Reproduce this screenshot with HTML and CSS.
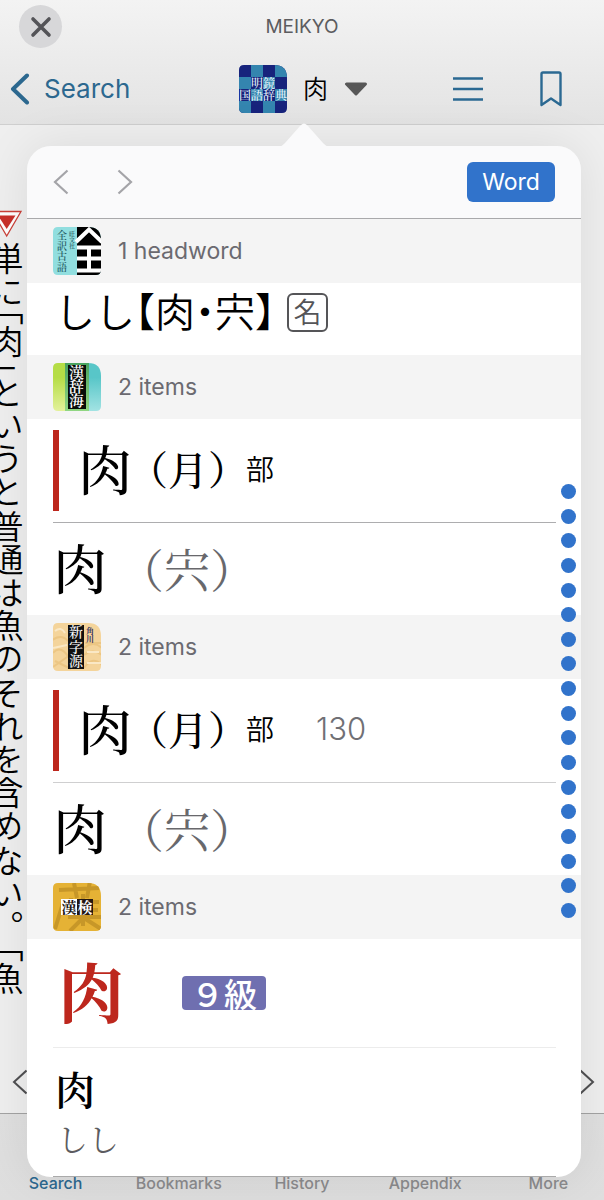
FILE: index.html
```html
<!DOCTYPE html>
<html lang="ja">
<head>
<meta charset="utf-8">
<meta name="viewport" content="width=device-width, initial-scale=1">
<title>MEIKYO</title>
<link rel="stylesheet" href="styles.css">
</head>
<body>
<div class="page">
  <header class="header">
    <div class="title-row">
      <button class="close" aria-label="Close"><svg width="22" height="22" viewBox="0 0 22 22"><path d="M3 3L19 19M19 3L3 19" fill="none" stroke="#545458" stroke-width="3.6" stroke-linecap="round"/></svg></button>
      <h1 class="title">MEIKYO</h1>
    </div>
    <nav class="nav-row">
      <a class="back" href="#"><svg width="20" height="32" viewBox="0 0 20 32"><path d="M17 2.5L3 16L17 29.5" fill="none" stroke="#2c688f" stroke-width="4" stroke-linecap="round" stroke-linejoin="round"/></svg>Search</a>
      <button class="picker" aria-label="Dictionary">
        <svg width="48" height="48" viewBox="0 0 48 48">
          <clipPath id="tile"><path d="M5 0H35Q48 0 48 13V43Q48 48 43 48H5Q0 48 0 43V5Q0 0 5 0Z"/></clipPath>
          <g clip-path="url(#tile)">
            <rect width="48" height="48" fill="#17237c"/>
            <path d="M12 0h12v12h-12zM36 0h12v12h-12zM0 12h12v12h-12zM24 12h12v12h-12zM12 24h12v12h-12zM36 24h12v12h-12zM0 36h12v12h-12zM24 36h12v12h-12z" fill="#3485af"/>
            <text x="12" y="22.500" class="ico-text" font-size="12" font-weight="500" fill="#e8f6fd">明鏡</text>
            <text x="0" y="34.500" class="ico-text" font-size="12" font-weight="500" fill="#e8f6fd">国語辞典</text>
          </g>
        </svg>
        <span class="picker-word">肉</span>
        <svg width="24" height="14" viewBox="0 0 24 14"><path d="M2.500 2H21.500L12 12Z" fill="#575757" stroke="#575757" stroke-width="3" stroke-linejoin="round"/></svg>
      </button>
      <button class="icon-btn menu" aria-label="Contents"><svg width="30" height="26" viewBox="0 0 30 26"><path d="M0 2.500H30M0 13H30M0 23.500H30" stroke="#2b6992" stroke-width="2.500"/></svg></button>
      <button class="icon-btn" aria-label="Bookmark"><svg width="22" height="36" viewBox="0 0 22 36"><path d="M1.500 34V3Q1.500 1.500 3 1.500H19Q20.500 1.500 20.500 3V34L11 27.500Z" fill="none" stroke="#2b6992" stroke-width="2.400" stroke-linejoin="round"/></svg></button>
    </nav>
  </header>

  <main class="reader">
    <div class="column">
      <svg class="mark" width="32" height="28" viewBox="0 0 32 28"><path d="M1.500 1.500H30L15.700 26Z" fill="#fff" stroke="#cb4038" stroke-width="1.300"/><path d="M7 5.500H24.500L15.700 19Z" fill="#c9302a"/></svg>
      <p class="vertical"><span>単に<i>「</i>肉<i>」</i></span><span>というと</span><span>普通は魚の</span><span>それを含め</span><span>ない。</span><span><i>「</i>魚</span></p>
    </div>
    <button class="turn" aria-label="Previous page"><svg width="15" height="26" viewBox="0 0 15 26"><path d="M14.500 1.500L2 13L14.500 24.500" fill="none" stroke="#505052" stroke-width="2"/></svg></button>
    <button class="turn turn-next" aria-label="Next page"><svg width="15" height="26" viewBox="0 0 15 26"><path d="M.5 1.500L13 13L.5 24.500" fill="none" stroke="#505052" stroke-width="2"/></svg></button>
  </main>

  <nav class="tabs">
    <a class="tab tab-on" href="#">Search</a>
    <a class="tab" href="#">Bookmarks</a>
    <a class="tab" href="#">History</a>
    <a class="tab" href="#">Appendix</a>
    <a class="tab" href="#">More</a>
  </nav>

  <section class="popover" aria-label="Other dictionaries">
    <svg class="tip" width="48" height="24" viewBox="0 0 48 24"><path d="M0 24Q3 22 5 20L20 3Q24 -2 28 3L43 20Q45 22 48 24Z" fill="#fafafb"/></svg>
    <div class="toolbar">
      <button class="step" aria-label="Back"><svg width="16" height="26" viewBox="0 0 16 26"><path d="M14.500 1.500L2 13L14.500 24.500" fill="none" stroke="#a4a4a8" stroke-width="2.200"/></svg></button>
      <button class="step" aria-label="Forward"><svg width="16" height="26" viewBox="0 0 16 26"><path d="M1.500 1.500L14 13L1.500 24.500" fill="none" stroke="#a4a4a8" stroke-width="2.200"/></svg></button>
      <button class="word">Word</button>
    </div>

    <h2 class="group">
      <svg width="48" height="48" viewBox="0 0 48 48"><g clip-path="url(#tile)">
        <rect width="48" height="48" fill="#91dedf"/><rect x="24" width="24" height="48" fill="#000"/>
        <path d="M23 15L36 2.500L49 15M24 20.500H48M24 31.500H48M24 43.500H48M36 20V43" fill="none" stroke="#fff" stroke-width="4"/>
        <text class="ico-text" font-size="10" font-weight="500" fill="#184f57"><tspan x="4" y="12">全</tspan><tspan x="4" y="23">訳</tspan><tspan x="4" y="33">古</tspan><tspan x="4" y="44">語</tspan></text>
        <text class="ico-text" font-size="6" font-weight="500" fill="#184f57"><tspan x="16" y="9">旺</tspan><tspan x="16" y="15">文</tspan><tspan x="16" y="21">社</tspan></text>
      </g></svg>
      1 headword
    </h2>
    <a class="entry entry-head" href="#"><span class="kana">しし<i>【</i>肉<i>・</i>宍<i>】</i></span><span class="pos">名</span></a>

    <h2 class="group">
      <svg width="48" height="48" viewBox="0 0 48 48">
        <linearGradient id="lime" x2="0" y2="1"><stop offset=".3" stop-color="#b5dd46"/><stop offset="1" stop-color="#e3f19b"/></linearGradient>
        <linearGradient id="aqua" x2="0" y2="1"><stop offset=".3" stop-color="#58c6c8"/><stop offset="1" stop-color="#a2e3e3"/></linearGradient>
        <linearGradient id="green" x2="0" y2="1"><stop stop-color="#49a35e"/><stop offset="1" stop-color="#91d783"/></linearGradient>
        <g clip-path="url(#tile)"><rect width="24" height="48" fill="url(#lime)"/><rect x="24" width="24" height="48" fill="url(#aqua)"/><rect x="12" width="24" height="48" fill="url(#green)"/><rect x="15" y="2" width="18" height="44" fill="#080c09"/>
        <text class="ico-text" font-size="15" font-weight="600" fill="#fff"><tspan x="16" y="15">漢</tspan><tspan x="16" y="29">辞</tspan><tspan x="16" y="43">海</tspan></text></g>
      </svg>
      2 items
    </h2>
    <a class="entry entry-radical" href="#"><span class="kanji">肉</span><span class="alt"><i>（</i>月<i>）</i></span><span class="bu">部</span></a>
    <a class="entry entry-kanji line-dark" href="#"><span class="kanji">肉</span><span class="alt alt-gray"><i>（</i>宍<i>）</i></span></a>

    <h2 class="group">
      <svg width="48" height="48" viewBox="0 0 48 48"><g clip-path="url(#tile)">
        <rect width="48" height="48" fill="#f4d49b"/><path d="M-2 18Q8 10 15 18M0 30Q8 20 18 38M0 44L17 32M2 38L18 46M31 25Q40 17 49 25M31 32Q40 25 49 32M31 45Q40 32 49 42M32 20H48" fill="none" stroke="#ecc684" stroke-width="2"/>
        <path d="M2 8Q8 3 12 10M0 25L14 22M34 40H48M34 29H46" fill="none" stroke="#fae8c5" stroke-width="2"/>
        <rect x="15" y="2" width="16" height="44" fill="#111"/>
        <text class="ico-text" font-size="14" font-weight="500" fill="#fff"><tspan x="16" y="14">新</tspan><tspan x="16" y="29">字</tspan><tspan x="16" y="43">源</tspan></text>
        <text class="ico-text" font-size="8" font-weight="700" fill="#33305e"><tspan x="33" y="11">角</tspan><tspan x="33" y="19">川</tspan></text>
      </g></svg>
      2 items
    </h2>
    <a class="entry entry-radical" href="#"><span class="kanji">肉</span><span class="alt"><i>（</i>月<i>）</i></span><span class="bu">部</span><span class="page-no">130</span></a>
    <a class="entry entry-kanji line-mid" href="#"><span class="kanji">肉</span><span class="alt alt-gray"><i>（</i>宍<i>）</i></span></a>

    <h2 class="group">
      <svg width="48" height="48" viewBox="0 0 48 48"><g clip-path="url(#tile)">
        <rect width="48" height="48" fill="#e5b235"/>
        <path d="M6 7L46 5M21 0L24 15M37 -2L34 15M15 19H46M18 15V27H45M30 11V43M15 34H48M10 20L2 46M30 35L17 48M31 35L48 46" fill="none" stroke="#c79728" stroke-width="4"/>
        <rect x="8" y="16" width="16" height="16" fill="#fff"/><rect x="24" y="16" width="16" height="16" fill="#251812"/>
        <text class="ico-text" y="29.500" font-size="15" font-weight="700"><tspan x="8.500" fill="#20140f">漢</tspan><tspan x="24.500" fill="#fff">検</tspan></text>
      </g></svg>
      2 items
    </h2>
    <a class="entry entry-level" href="#"><span class="kanji-red">肉</span><span class="grade">９級</span></a>
    <a class="entry entry-last line-light" href="#"><span class="small-kanji">肉</span><span class="reading">しし</span></a>

    <div class="dots" aria-hidden="true"><b></b><b></b><b></b><b></b><b></b><b></b><b></b><b></b><b></b><b></b><b></b><b></b><b></b><b></b><b></b><b></b><b></b><b></b></div>
  </section>
</div>
</body>
</html>
```
FILE: styles.css
```css
* { box-sizing: border-box; }

body {
  margin: 0;
  font-family: Inter, "Noto Sans CJK JP", sans-serif;
  color: #000;
}

button {
  border: 0;
  padding: 0;
  background: none;
  font: inherit;
  color: inherit;
}

a { color: inherit; text-decoration: none; }
i { font-style: normal; font-feature-settings: "halt"; }
svg { display: block; flex: none; }
.ico-text { font-family: "Noto Serif CJK JP", "Noto Sans CJK JP", sans-serif; }

.page {
  position: relative;
  display: flex;
  flex-direction: column;
  min-height: 100vh;
  overflow: hidden;
  background: #ececec;
}

/* Header */
.header {
  height: 125px;
  background: linear-gradient(#f3f3f3, #e3e3e3);
  border-bottom: 1px solid #cfcfcf;
}

.title-row {
  position: relative;
  display: flex;
  align-items: center;
  justify-content: center;
  height: 53px;
}

.title {
  margin: 0;
  font-size: 19px;
  font-weight: 400;
  color: #5c5c5f;
}

.close {
  position: absolute;
  left: 19px;
  top: 5px;
  display: grid;
  place-items: center;
  width: 43px;
  height: 43px;
  border-radius: 50%;
  background: #d7d7d9;
}

.nav-row {
  display: flex;
  align-items: center;
  height: 71px;
  padding: 0 42px 0 10px;
}

.back {
  display: flex;
  align-items: center;
  gap: 14px;
  width: 229px;
  font-size: 26px;
  color: #2c688f;
}

.picker {
  display: flex;
  align-items: center;
  gap: 16px;
}

.picker-word {
  padding-bottom: 4px;
  font-family: "Noto Sans CJK JP", sans-serif;
  font-size: 25px;
  font-weight: 350;
  line-height: 36px;
}

.menu { margin-left: auto; margin-right: 57px; }

/* Reader */
.reader {
  position: relative;
  flex: 1;
  background: #efefef;
}

.column { padding-top: 85px; }
.mark { margin-left: -9px; }

.vertical {
  display: flex;
  gap: 2px;
  width: 34px;
  margin: 4px 0 0 -10px;
  writing-mode: vertical-rl;
  font-family: "Noto Sans CJK JP", sans-serif;
  font-size: 33px;
  font-weight: 350;
  line-height: 34px;
  white-space: nowrap;
}

.vertical i { font-feature-settings: "vhal"; }

.turn { position: absolute; left: 12px; bottom: 18px; }
.turn-next { left: auto; right: 9px; }

/* Tab bar */
.tabs {
  display: grid;
  grid-template-columns: repeat(5, 1fr);
  align-items: end;
  height: 87px;
  margin: 0 -6px;
  padding-bottom: 7px;
  border-top: 1px solid #a3a3a3;
  background: linear-gradient(#e0e0e0, #dedede);
  text-align: center;
}

.tab {
  font-size: 16px;
  line-height: 20px;
  font-weight: 500;
  color: #8b8b8d;
}

.tab-on { color: #2c688f; }

/* Popover */
.popover {
  position: absolute;
  top: 146px;
  left: 27px;
  right: 23px;
  border-radius: 24px;
  background: linear-gradient(#fafafb 72px, #fff 72px);
  box-shadow: 0 0 50px rgba(0, 0, 0, 0.09);
}

.tip {
  position: absolute;
  top: -23px;
  left: calc(50% - 24px);
}

.toolbar {
  display: flex;
  align-items: center;
  gap: 48px;
  height: 73px;
  padding: 0 26px;
  border-bottom: 1px solid #a9a9ab;
}

.word {
  width: 88px;
  height: 40px;
  margin-left: auto;
  border-radius: 6px;
  background: #3173cb;
  color: #fff;
  font-size: 23px;
}

.group {
  display: flex;
  align-items: center;
  gap: 17px;
  height: 64px;
  margin: 0;
  padding: 0 26px;
  background: #f4f4f4;
  font-size: 23px;
  font-weight: 400;
  color: #6b6a70;
}

.entry {
  display: flex;
  align-items: center;
  margin: 0 25px 0 26px;
  padding-bottom: 5px;
  font-family: "Noto Serif CJK JP", "Noto Sans CJK JP", sans-serif;
  font-weight: 500;
  line-height: 1;
}

.entry-head {
  height: 72px;
  padding: 0 2px 14px;
  gap: 12px;
  font-family: "Noto Sans CJK JP", sans-serif;
}

.kana { padding-bottom: 4px; font-size: 40px; font-weight: 350; }

.pos {
  display: grid;
  place-items: center;
  width: 41px;
  height: 39px;
  padding-bottom: 3px;
  border: 2px solid #555558;
  border-radius: 6px;
  font-size: 28px;
  font-weight: 350;
  color: #555558;
}

.entry-radical {
  position: relative;
  height: 103px;
  padding-left: 25px;
}

.entry-radical::before {
  content: "";
  position: absolute;
  left: 0;
  top: 11px;
  bottom: 11px;
  width: 6px;
  background: #bd271d;
}

.kanji { width: 70px; font-size: 54px; }
.alt { font-size: 40px; }
.bu { margin-left: 18px; font-size: 28px; font-weight: 350; font-family: "Noto Sans CJK JP", sans-serif; }
.page-no { margin-left: 42px; font-family: Inter, sans-serif; font-size: 31px; font-weight: 300; color: #707075; }

.entry-kanji { height: 93px; }
.entry-kanji .kanji { width: 88px; }
.entry-kanji .alt-gray { font-size: 46px; font-weight: 400; color: #68686c; }

.line-dark { border-top: 1px solid #adadaf; }
.line-mid { border-top: 1px solid #cfcfd0; }
.line-light { border-top: 1px solid #ececec; }

.entry-level { height: 108px; gap: 58px; padding: 0 0 0 5px; }
.kanji-red { padding-bottom: 6px; font-size: 66px; font-weight: 700; color: #bd271d; }

.grade {
  padding: 0 9px;
  border-radius: 4px;
  background: #6f6fb0;
  color: #fff;
  font-family: "Noto Sans CJK JP", sans-serif;
  font-size: 33px;
  font-weight: 500;
  line-height: 34px;
}

.entry-last {
  flex-direction: column;
  align-items: flex-start;
  gap: 14px;
  height: 130px;
  padding: 20px 2px 0;
  border-bottom: 1px solid #aaa;
}

.small-kanji { font-size: 40px; font-weight: 600; }
.reading { padding-left: 2px; font-size: 31px; font-weight: 400; color: #5c5c60; }

.dots {
  position: absolute;
  top: 338px;
  right: 5px;
  display: flex;
  flex-direction: column;
  justify-content: space-between;
  height: 434px;
}

.dots b {
  width: 15px;
  height: 15px;
  border-radius: 50%;
  background: #3173cb;
}
```
